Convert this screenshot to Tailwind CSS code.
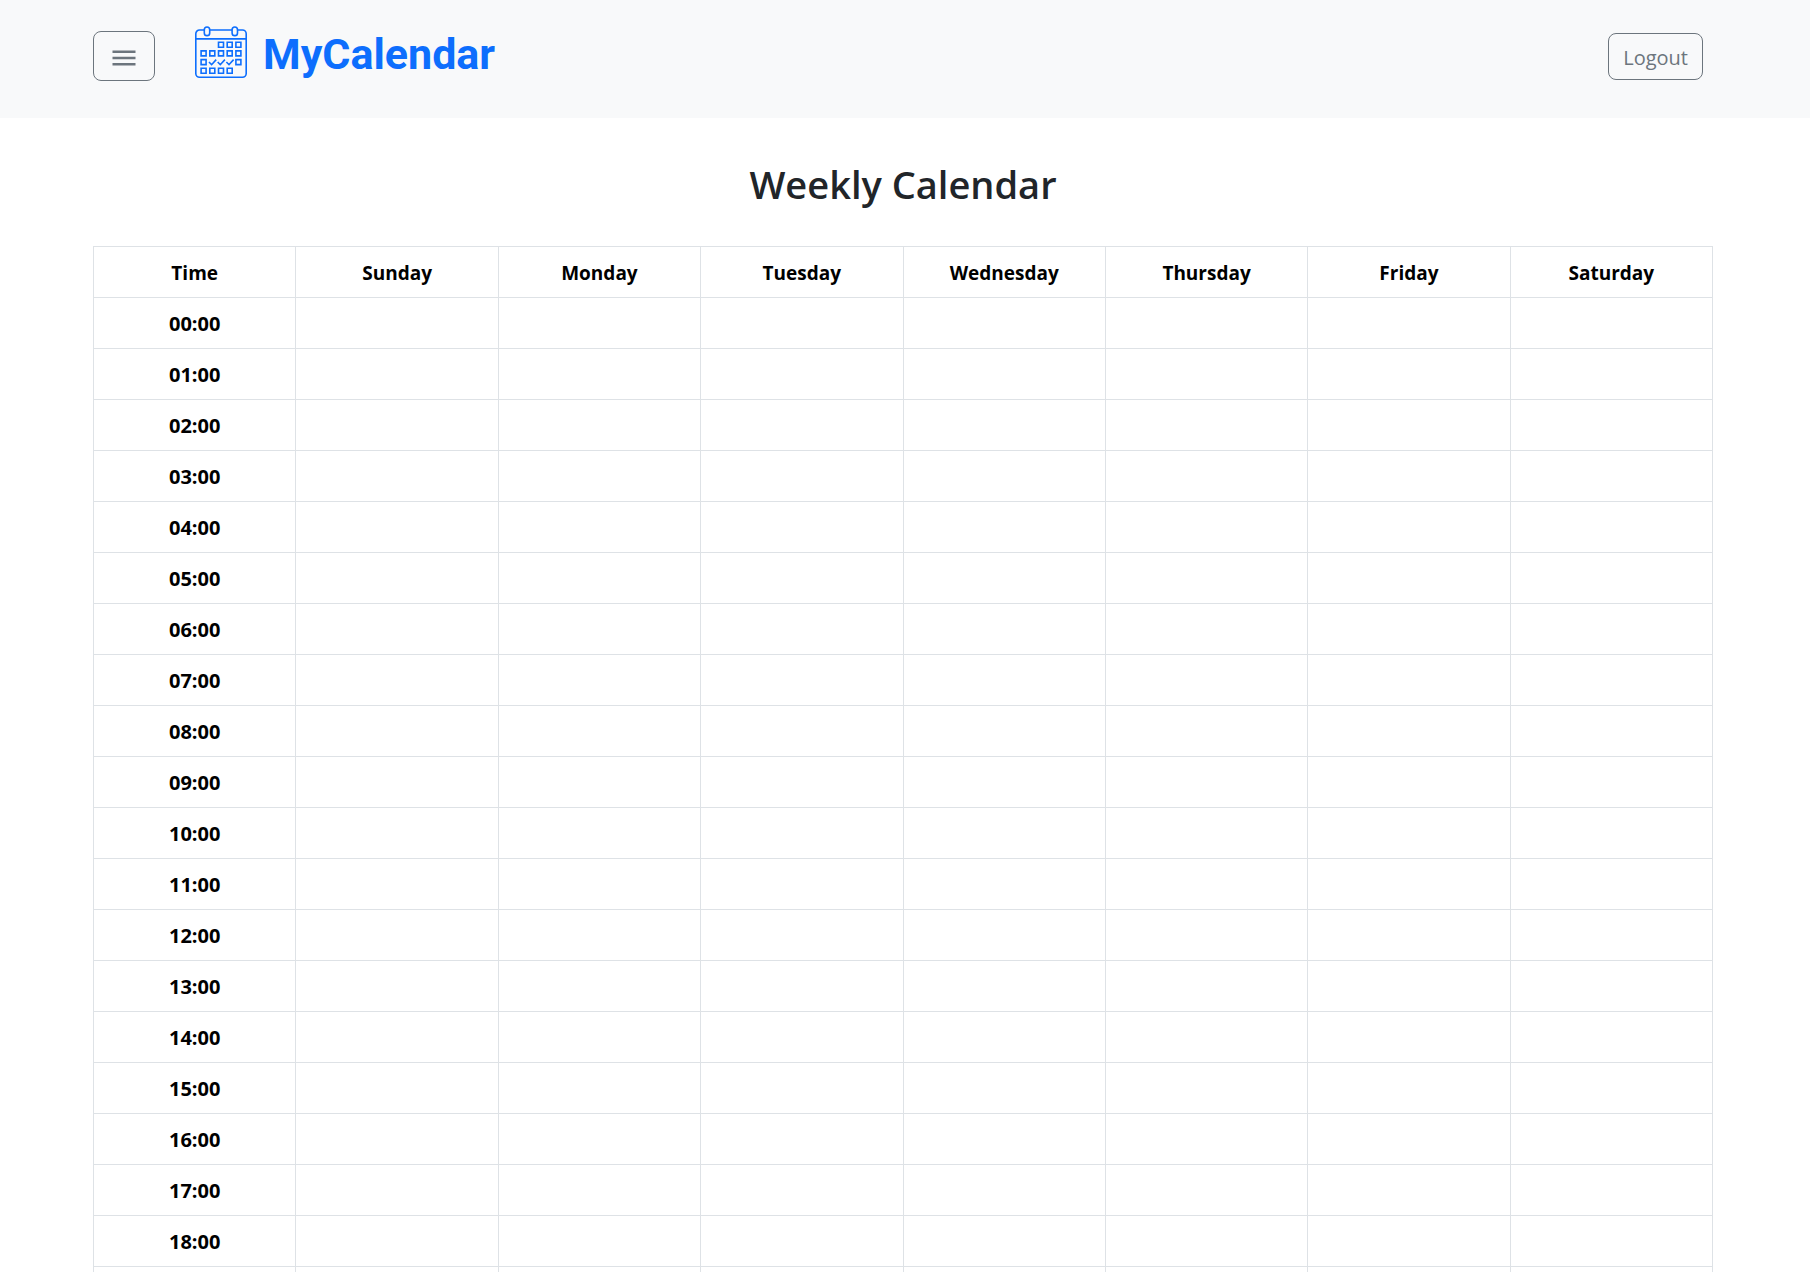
<!DOCTYPE html>
<html lang="en">
<head>
<meta charset="utf-8">
<meta name="viewport" content="width=device-width, initial-scale=1">
<title>MyCalendar</title>
<script src="https://cdn.jsdelivr.net/npm/@tailwindcss/browser@4"></script>
</head>
<body class="bg-white font-['Open_Sans',sans-serif] text-[#212529]">
<header class="flex h-[118px] items-start justify-between bg-[#f8f9fa] pt-[26px] pr-[107px] pl-[93px]">
  <div class="flex items-start">
    <button type="button" aria-label="Menu" class="mt-[5px] flex h-[50px] w-[62px] items-center justify-center rounded-lg border border-[#6c757d] text-[#6c757d]">
      <svg class="mt-1 h-4 w-6" viewBox="0 0 24 16" fill="currentColor" aria-hidden="true">
        <path d="M0.5 0.5h23v2.4h-23zM0.5 6.8h23v2.4h-23zM0.5 13.1h23v2.4h-23z"/>
      </svg>
    </button>
    <a href="#" class="ml-10 flex items-start text-[#0d6efd]">
      <svg class="h-[52px] w-[52px]" viewBox="0 0 52 52" fill="none" stroke="currentColor" stroke-width="1.6" aria-hidden="true">
        <path d="M9 4H4.500A3.700 3.700 0 0 0 .8 7.700V47.500A3.700 3.700 0 0 0 4.500 51.200H47.500A3.700 3.700 0 0 0 51.200 47.500V7.700A3.700 3.700 0 0 0 47.500 4H43M15 4H37M.8 12.900H51.200"/>
        <rect x="9.300" y="1" width="5.400" height="8.600" rx="2.700"/>
        <rect x="37.100" y="1" width="5.400" height="8.600" rx="2.700"/>
        <path d="M23.500 16.300h5v5h-5zM32.200 16.300h5v5h-5zM40.900 16.300h5v5h-5zM6.100 24.900h5v5h-5zM14.800 24.900h5v5h-5zM23.500 24.900h5v5h-5zM32.200 24.900h5v5h-5zM40.900 24.900h5v5h-5zM6.100 33.600h5v5h-5zM40.900 33.600h5v5h-5zM6.100 42.300h5v5h-5zM14.800 42.300h5v5h-5zM23.500 42.300h5v5h-5zM32.200 42.300h5v5h-5z"/>
        <path d="M14 36l2.600 2.700 4.600-5.100M22.700 36l2.600 2.700 4.600-5.100M31.400 36l2.600 2.700 4.600-5.100"/>
      </svg>
      <span class="ml-4 font-[Roboto] text-[43px] leading-[56px] font-bold">MyCalendar</span>
    </a>
  </div>
  <button type="button" class="mt-[7px] h-[47px] rounded-lg border border-[#6c757d] px-[14px] pt-[2px] text-[20px] text-[#6c757d]">Logout</button>
</header>
<main class="pr-[97px] pl-[93px]">
  <h1 class="pt-[38px] pb-[34px] text-center text-[38px] leading-[56px] font-semibold">Weekly Calendar</h1>
  <table class="w-full table-fixed border-collapse text-center text-[19px] leading-7 text-black [&_td]:border [&_td]:border-[#dee2e6] [&_th]:h-[51px] [&_th]:border [&_th]:border-[#dee2e6] [&_th]:pt-[2px] [&_th]:font-bold">
    <thead>
      <tr><th scope="col">Time</th><th scope="col">Sunday</th><th scope="col">Monday</th><th scope="col">Tuesday</th><th scope="col">Wednesday</th><th scope="col">Thursday</th><th scope="col">Friday</th><th scope="col">Saturday</th></tr>
    </thead>
    <tbody id="hours" class="text-[20px]"></tbody>
  </table>
</main>
<script>
  const hours = document.getElementById('hours');
  for (let h = 0; h < 24; h++) {
    const row = hours.insertRow();
    const label = document.createElement('th');
    label.scope = 'row';
    label.textContent = String(h).padStart(2, '0') + ':00';
    row.append(label);
    for (let d = 0; d < 7; d++) row.insertCell();
  }
</script>
</body>
</html>
